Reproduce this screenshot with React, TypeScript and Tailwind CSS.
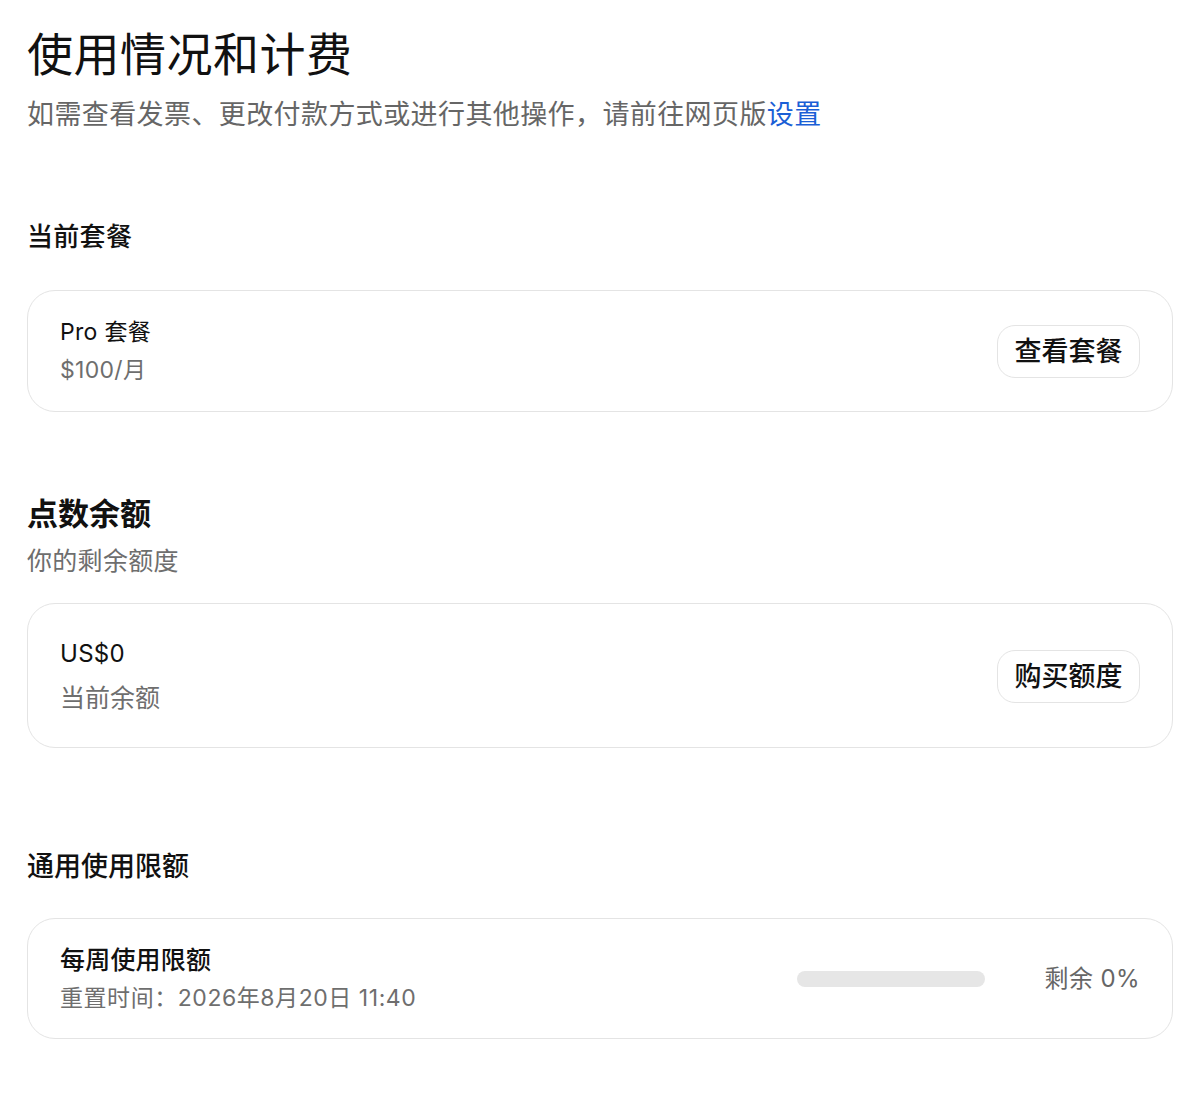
import React from "react";

const font = { fontFamily: 'Inter, "Noto Sans CJK SC", sans-serif' };

function Button({ children }: { children: React.ReactNode }) {
  return (
    <button className="h-[53px] w-[143px] rounded-[18px] border-[1.5px] border-[#e4e4e4] bg-white text-[27px] font-medium leading-none text-[#111]">
      {children}
    </button>
  );
}

export default function App() {
  return (
    <div className="min-h-[1096px] bg-white px-[27px] pt-[26px] text-[#111]" style={font}>
      <h1 className="text-[46px] font-normal leading-[56px] tracking-[0.5px]">使用情况和计费</h1>
      <p className="mt-[15px] text-[27px] leading-[36px] tracking-[0.4px] text-[#666]">
        如需查看发票、更改付款方式或进行其他操作，请前往网页版<span className="text-[#1a5fd6]">设置</span>
      </p>

      <h2 className="mt-[86px] text-[26px] font-medium leading-[36px] tracking-[0.3px]">当前套餐</h2>
      <div className="mt-[35px] flex items-center justify-between rounded-[28px] border-[1.5px] border-[#e4e4e4] py-[25px] pl-[32px] pr-[32px]">
        <div>
          <div className="text-[23px] leading-[32px] tracking-[0.3px]">Pro 套餐</div>
          <div className="mt-[6px] text-[23px] leading-[32px] tracking-[0.3px] text-[#6e6e6e]">$100/月</div>
        </div>
        <Button>查看套餐</Button>
      </div>

      <h2 className="mt-[82px] text-[31px] font-semibold leading-[40px]">点数余额</h2>
      <p className="mt-[10px] text-[25px] leading-[34px] tracking-[0.3px] text-[#6e6e6e]">你的剩余额度</p>
      <div className="mt-[25px] flex items-center justify-between rounded-[28px] border-[1.5px] border-[#e4e4e4] pb-[32px] pl-[32px] pr-[32px] pt-[34px]">
        <div>
          <div className="text-[24px] leading-[32px] tracking-[0.3px]">US$0</div>
          <div className="mt-[11px] text-[25px] leading-[34px] text-[#6e6e6e]">当前余额</div>
        </div>
        <Button>购买额度</Button>
      </div>

      <h2 className="mt-[101px] text-[27px] font-medium leading-[36px]">通用使用限额</h2>
      <div className="mt-[33px] flex items-center justify-between rounded-[28px] border-[1.5px] border-[#e4e4e4] pb-[24px] pl-[32px] pr-[32px] pt-[24px]">
        <div>
          <div className="text-[25px] font-medium leading-[34px] tracking-[0.2px]">每周使用限额</div>
          <div className="mt-[5px] text-[23px] leading-[32px] tracking-[0.55px] text-[#6e6e6e]">重置时间：2026年8月20日 11:40</div>
        </div>
        <div className="flex items-center gap-[60px]">
          <div className="h-[16px] w-[188px] rounded-full bg-[#e6e6e6]" />
          <div className="text-[24px] leading-[32px] tracking-[0.4px] text-[#666]">剩余 0%</div>
        </div>
      </div>
    </div>
  );
}
